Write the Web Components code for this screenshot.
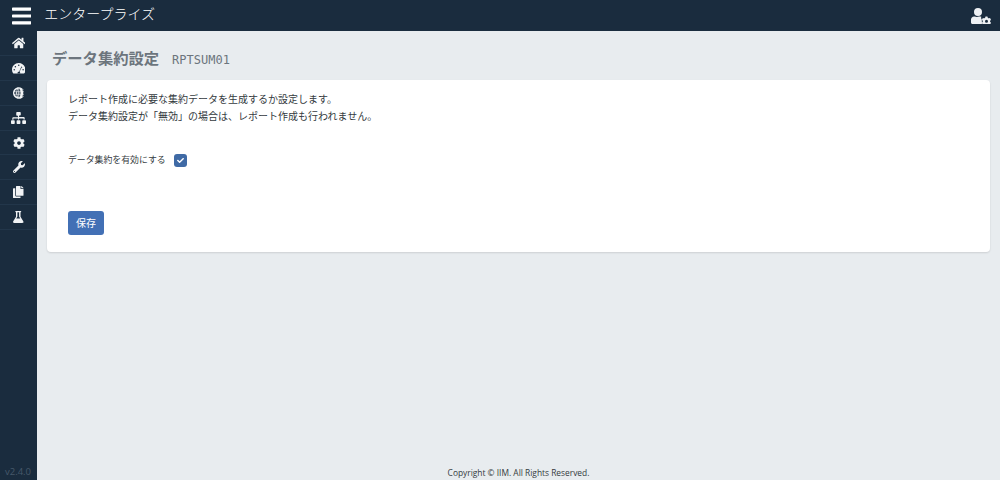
<!DOCTYPE html>
<html lang="ja">
<head>
<meta charset="utf-8">
<title>データ集約設定</title>
<style>
  html, body { margin: 0; height: 100%; }
  body { font-family: "Open Sans", "Noto Sans CJK JP", sans-serif; background: #e8ecef; overflow: hidden; }
</style>
</head>
<body>
<app-shell>
  <top-bar slot="top" title-text="エンタープライズ"></top-bar>
  <side-nav slot="side" version="v2.4.0">
    <nav-item icon="home"></nav-item>
    <nav-item icon="gauge"></nav-item>
    <nav-item icon="globe"></nav-item>
    <nav-item icon="sitemap"></nav-item>
    <nav-item icon="cog"></nav-item>
    <nav-item icon="wrench"></nav-item>
    <nav-item icon="copy"></nav-item>
    <nav-item icon="flask"></nav-item>
  </side-nav>
  <page-head code="RPTSUM01">データ集約設定</page-head>
  <setting-card>
    <p>レポート作成に必要な集約データを生成するか設定します。</p>
    <p>データ集約設定が「無効」の場合は、レポート作成も行われません。</p>
    <check-field slot="field" checked>データ集約を有効にする</check-field>
    <save-button slot="action">保存</save-button>
  </setting-card>
  <page-foot slot="foot">Copyright © IIM. All Rights Reserved.</page-foot>
</app-shell>

<script>
const ICONS = {
  bars: ["0 0 448 512", "M16 132h416c8.837 0 16-7.163 16-16V76c0-8.837-7.163-16-16-16H16C7.163 60 0 67.163 0 76v40c0 8.837 7.163 16 16 16zm0 160h416c8.837 0 16-7.163 16-16v-40c0-8.837-7.163-16-16-16H16c-8.837 0-16 7.163-16 16v40c0 8.837 7.163 16 16 16zm0 160h416c8.837 0 16-7.163 16-16v-40c0-8.837-7.163-16-16-16H16c-8.837 0-16 7.163-16 16v40c0 8.837 7.163 16 16 16z"],
  home: ["0 0 576 512", "M280.37 148.26L96 300.11V464a16 16 0 0 0 16 16l112.06-.29a16 16 0 0 0 15.92-16V368a16 16 0 0 1 16-16h64a16 16 0 0 1 16 16v95.64a16 16 0 0 0 16 16.05L464 480a16 16 0 0 0 16-16V300L295.67 148.26a12.19 12.19 0 0 0-15.3 0zM571.6 251.47L488 182.56V44.05a12 12 0 0 0-12-12h-56a12 12 0 0 0-12 12v72.61L318.47 43a48 48 0 0 0-61 0L4.34 251.47a12 12 0 0 0-1.6 16.9l25.5 31A12 12 0 0 0 45.15 301l235.22-193.74a12.19 12.19 0 0 1 15.3 0L530.9 301a12 12 0 0 0 16.9-1.6l25.5-31a12 12 0 0 0-1.7-16.93z"],
  gauge: ["0 0 576 512", "M288 40C129 40 0 169 0 328c0 53 14 102 39 145 6 9 16 15 27 15h444c11 0 21-6 27-15 25-43 39-92 39-145C576 169 447 40 288 40zm0 64a32 32 0 1 1 0 64 32 32 0 0 1 0-64zM96 360a32 32 0 1 1 0-64 32 32 0 0 1 0 64zm48-128a32 32 0 1 1 0-64 32 32 0 0 1 0 64zm246 11l-62 186c15 14 24 34 24 55H232c0-44 36-80 80-80h1l62-185c3-9 12-13 20-10 8 3 13 12 10 20zm12 21a32 32 0 1 1 24-54 32 32 0 0 1-24 54zm72 96a32 32 0 1 1 0-64 32 32 0 0 1 0 64z"],
  globe: ["0 0 496 512", "M248 8C111 8 0 119 0 256s111 248 248 248 248-111 248-248S385 8 248 8zm-72 90c-14 26-25 58-32 94H72c22-43 60-77 104-94zM52 256c0-14 2-28 5-32h81c-1 10-2 21-2 32s1 22 2 32H57c-3-4-5-18-5-32zm20 64h72c7 36 18 68 32 94-44-17-82-51-104-94zm160 126c-20-12-42-56-52-126h52v126zm0-158h-58c-1-10-2-21-2-32s1-22 2-32h58v64zm0-96h-52c10-70 32-114 52-126v126zm32-126c20 12 42 56 52 126h-52V66zm0 380V320h52c-10 70-32 114-52 126zm58-158h-58v-64h58c1 10 2 21 2 32s-1 22-2 32zm72 126c14-26 25-58 32-94h72c-22 43-60 77-104 94zm32-126c1-10 2-21 2-32s-1-22-2-32h81c3 4 5 18 5 32s-2 28-5 32h-81zm-32-190c44 17 82 51 104 94h-72c-7-36-18-68-32-94z"],
  sitemap: ["0 0 640 512", "M128 352H32c-18 0-32 14-32 32v96c0 18 14 32 32 32h96c18 0 32-14 32-32v-96c0-18-14-32-32-32zm-24-80h192v48h48v-48h192v48h48v-57c0-26-21-47-47-47H344v-64h40c18 0 32-14 32-32V32c0-18-14-32-32-32H256c-18 0-32 14-32 32v96c0 18 14 32 32 32h40v64H103c-26 0-47 21-47 47v57h48v-48zm264 80h-96c-18 0-32 14-32 32v96c0 18 14 32 32 32h96c18 0 32-14 32-32v-96c0-18-14-32-32-32zm240 0h-96c-18 0-32 14-32 32v96c0 18 14 32 32 32h96c18 0 32-14 32-32v-96c0-18-14-32-32-32z"],
  cog: ["0 0 512 512", "M487.4 315.7l-42.6-24.6c4.3-23.2 4.3-47 0-70.2l42.6-24.6c4.9-2.8 7.1-8.6 5.5-14-11.1-35.6-30-67.8-54.7-94.6-3.8-4.1-10-5.1-14.8-2.3L380.8 110c-17.9-15.4-38.5-27.3-60.8-35.1V25.8c0-5.6-3.9-10.5-9.4-11.7-36.7-8.2-74.3-7.8-109.2 0-5.5 1.2-9.4 6.1-9.4 11.7V75c-22.2 7.9-42.8 19.8-60.8 35.1L88.7 85.5c-4.9-2.8-11-1.9-14.8 2.3-24.7 26.7-43.6 58.9-54.7 94.6-1.7 5.4.6 11.2 5.5 14L67.3 221c-4.3 23.2-4.3 47 0 70.2l-42.6 24.6c-4.9 2.8-7.1 8.6-5.5 14 11.1 35.6 30 67.8 54.7 94.6 3.8 4.1 10 5.1 14.8 2.3l42.6-24.6c17.9 15.4 38.5 27.3 60.8 35.1v49.2c0 5.6 3.9 10.5 9.4 11.7 36.7 8.2 74.3 7.8 109.2 0 5.5-1.2 9.4-6.1 9.4-11.7v-49.2c22.2-7.9 42.8-19.8 60.8-35.1l42.6 24.6c4.9 2.8 11 1.9 14.8-2.3 24.7-26.7 43.6-58.9 54.7-94.6 1.5-5.5-.7-11.3-5.6-14.1zM256 336c-44.1 0-80-35.9-80-80s35.9-80 80-80 80 35.9 80 80-35.9 80-80 80z"],
  wrench: ["0 0 512 512", "M507.73 109.1c-2.24-9.03-13.54-12.09-20.12-5.51l-74.36 74.36-67.88-11.31-11.31-67.88 74.36-74.36c6.62-6.62 3.43-17.9-5.66-20.16-47.38-11.74-99.55.91-136.58 37.93-39.64 39.64-50.55 97.1-34.05 147.2L18.74 402.76c-24.99 24.99-24.99 65.51 0 90.5 24.99 24.99 65.51 24.99 90.5 0l213.21-213.21c50.12 16.71 107.47 5.68 147.37-34.22 37.07-37.07 49.7-89.32 37.91-136.73zM64 472c-13.25 0-24-10.75-24-24 0-13.26 10.75-24 24-24s24 10.74 24 24c0 13.25-10.75 24-24 24z"],
  copy: ["0 0 448 512", "M320 448v40c0 13-11 24-24 24H24c-13 0-24-11-24-24V120c0-13 11-24 24-24h72v296c0 31 25 56 56 56h168zm0-344V0H152c-13 0-24 11-24 24v368c0 13 11 24 24 24h272c13 0 24-11 24-24V128H344c-13 0-24-11-24-24zm121-31L375 7c-4-4-11-7-17-7h-6v96h96v-6c0-6-3-13-7-17z"],
  flask: ["0 0 448 512", "M437 440L320 250V48h8c13 0 24-11 24-24S341 0 328 0H120c-13 0-24 11-24 24s11 24 24 24h8v202L11 440c-29 47 5 72 41 72h344c36 0 70-25 41-72zM137 320l47-76c3-4 4-9 4-14V48h72v182c0 5 1 10 4 14l47 76H137z"],
  check: ["0 0 512 512", "M173.898 439.404l-166.4-166.4c-9.997-9.997-9.997-26.206 0-36.204l36.203-36.204c9.997-9.998 26.207-9.998 36.204 0L192 312.69 432.095 72.596c9.997-9.997 26.207-9.997 36.204 0l36.203 36.204c9.997 9.997 9.997 26.206 0 36.204l-294.4 294.401c-9.998 9.997-26.207 9.997-36.204-.001z"],
  usercog: ["0 0 640 512", "M224 256a128 128 0 1 0 0-256 128 128 0 0 0 0 256zM358 448c-14-8-21-25-16-41 3-10 7-20 12-29-2-2-7-6-10-8-14-8-20-25-16-40-8-15-7-35 4-48-18-8-37-10-58-10h-17c-22 10-46 16-71 16s-49-6-71-16h-17C44 272 0 316 0 371v93c0 27 22 48 48 48h307c-5-6-7-14-7-22v-27c0-8 4-11 10-15zM610 403l26-15c3-1 4-5 3-8-7-22-19-42-34-59-2-3-5-3-8-2l-26 15c-11-9-23-16-37-21v-30c0-4-2-6-6-7-22-5-45-5-68 0-3 1-5 3-5 7v30c-14 5-26 12-38 21l-25-15c-3-1-7-1-9 2-15 17-27 37-34 59-1 3 0 7 3 8l26 15c-3 14-3 29 0 44l-26 15c-3 1-4 5-3 8 7 22 19 42 34 59 2 3 6 3 9 2l25-15c12 9 24 16 38 21v30c0 4 2 6 5 7 23 5 46 5 68 0 4-1 6-3 6-7v-30c14-5 26-12 37-21l26 15c3 1 6 1 8-2 15-17 27-37 34-59 1-3 0-7-3-8l-26-15c3-14 3-29 0-44zm-114 70a48 48 0 1 1 0-96 48 48 0 0 1 0 96z"]
};
function iconSvg(name, size) {
  const [box, d] = ICONS[name];
  return `<svg viewBox="${box}" height="${size}" fill="currentColor" aria-hidden="true"><path d="${d}"/></svg>`;
}

class AppShell extends HTMLElement {
  constructor() {
    super();
    this.attachShadow({ mode: "open" });
    this.shadowRoot.innerHTML = `
      <style>
        :host { display: grid; grid-template-columns: 37px 1fr; grid-template-rows: 31px 1fr; height: 480px; }
        .top { grid-column: 1 / 3; display: block; }
        main { display: flex; flex-direction: column; min-width: 0; padding: 0 10px 0 10px; }
        .grow { flex: 1; }
      </style>
      <div class="top"><slot name="top"></slot></div>
      <slot name="side"></slot>
      <main>
        <slot></slot>
        <div class="grow"></div>
        <slot name="foot"></slot>
      </main>`;
  }
}
customElements.define("app-shell", AppShell);

class TopBar extends HTMLElement {
  constructor() {
    super();
    this.attachShadow({ mode: "open" });
    this.shadowRoot.innerHTML = `
      <style>
        :host { display: flex; align-items: center; height: 31px; background: #1a2c3e; color: #fff; }
        .menu { display: flex; margin-left: 12px; }
        .title { margin-left: 13px; font: 14px/20px "Noto Sans CJK JP", sans-serif; font-weight: 300; position: relative; top: -3px; }
        .user { margin-left: auto; margin-right: 9px; display: flex; color: #eef1f4; }
      </style>
      <span class="menu">${iconSvg("bars", 22)}</span>
      <span class="title"></span>
      <span class="user">${iconSvg("usercog", 16)}</span>`;
    this.shadowRoot.querySelector(".title").textContent = this.getAttribute("title-text");
  }
}
customElements.define("top-bar", TopBar);

class SideNav extends HTMLElement {
  constructor() {
    super();
    this.attachShadow({ mode: "open" });
    this.shadowRoot.innerHTML = `
      <style>
        :host { display: flex; flex-direction: column; background: #1a2c3e; height: 449px; }
        nav { flex: 1; }
        .version { color: #46586a; font: 9.5px/12px "Open Sans", sans-serif; padding: 0 0 2px 5px; }
      </style>
      <nav><slot></slot></nav>
      <div class="version"></div>`;
    this.shadowRoot.querySelector(".version").textContent = this.getAttribute("version");
  }
}
customElements.define("side-nav", SideNav);

class NavItem extends HTMLElement {
  constructor() {
    super();
    this.attachShadow({ mode: "open" });
    this.shadowRoot.innerHTML = `
      <style>
        :host { display: flex; align-items: center; justify-content: center; height: 23.9px; border-bottom: 1px solid #22364a; color: #f1f3f5; }
        svg { display: block; }
      </style>
      ${iconSvg(this.getAttribute("icon"), 12)}`;
  }
}
customElements.define("nav-item", NavItem);

class PageHead extends HTMLElement {
  constructor() {
    super();
    this.attachShadow({ mode: "open" });
    this.shadowRoot.innerHTML = `
      <style>
        :host { display: flex; align-items: baseline; height: 49px; padding: 16px 0 0 5px; box-sizing: border-box; color: #6c757d; }
        h1 { margin: 0; font: 700 15.3px/20px "Noto Sans CJK JP", sans-serif; }
        code { margin-left: 13px; font: 12px/20px "DejaVu Sans Mono", monospace; }
      </style>
      <h1><slot></slot></h1>
      <code></code>`;
    this.shadowRoot.querySelector("code").textContent = this.getAttribute("code");
  }
}
customElements.define("page-head", PageHead);

class SettingCard extends HTMLElement {
  constructor() {
    super();
    this.attachShadow({ mode: "open" });
    this.shadowRoot.innerHTML = `
      <style>
        :host { display: block; background: #fff; border-radius: 4px; box-shadow: 0 1px 2px rgba(0,0,0,.12); padding: 10px 21px 10px 21px; height: 172px; box-sizing: border-box; color: #343a40; font: 10px/17px "Noto Sans CJK JP", sans-serif; }
        ::slotted(p) { margin: 0; }
        .field { margin-top: 29px; }
        .action { margin-top: 44px; }
      </style>
      <slot></slot>
      <div class="field"><slot name="field"></slot></div>
      <div class="action"><slot name="action"></slot></div>`;
  }
}
customElements.define("setting-card", SettingCard);

class CheckField extends HTMLElement {
  constructor() {
    super();
    this.attachShadow({ mode: "open" });
    this.shadowRoot.innerHTML = `
      <style>
        :host { display: flex; align-items: center; gap: 8px; font: 8.9px/14px "Noto Sans CJK JP", sans-serif; color: #343a40; }
        .box { width: 13px; height: 13px; border-radius: 3px; background: #3f6aa5; color: #fff; display: flex; align-items: center; justify-content: center; }
      </style>
      <span><slot></slot></span>
      <span class="box">${iconSvg("check", 7)}</span>`;
  }
}
customElements.define("check-field", CheckField);

class SaveButton extends HTMLElement {
  constructor() {
    super();
    this.attachShadow({ mode: "open" });
    this.shadowRoot.innerHTML = `
      <style>
        :host { display: inline-flex; align-items: center; justify-content: center; width: 36px; height: 24px; border-radius: 3px; background: #4270b5; color: #fff; font: 10px/14px "Noto Sans CJK JP", sans-serif; }
      </style>
      <slot></slot>`;
  }
}
customElements.define("save-button", SaveButton);

class PageFoot extends HTMLElement {
  constructor() {
    super();
    this.attachShadow({ mode: "open" });
    this.shadowRoot.innerHTML = `
      <style>
        :host { display: block; text-align: center; color: #343a40; font: 8.4px/13px "Open Sans", sans-serif; height: 14px; }
      </style>
      <slot></slot>`;
  }
}
customElements.define("page-foot", PageFoot);
</script>
</body>
</html>
